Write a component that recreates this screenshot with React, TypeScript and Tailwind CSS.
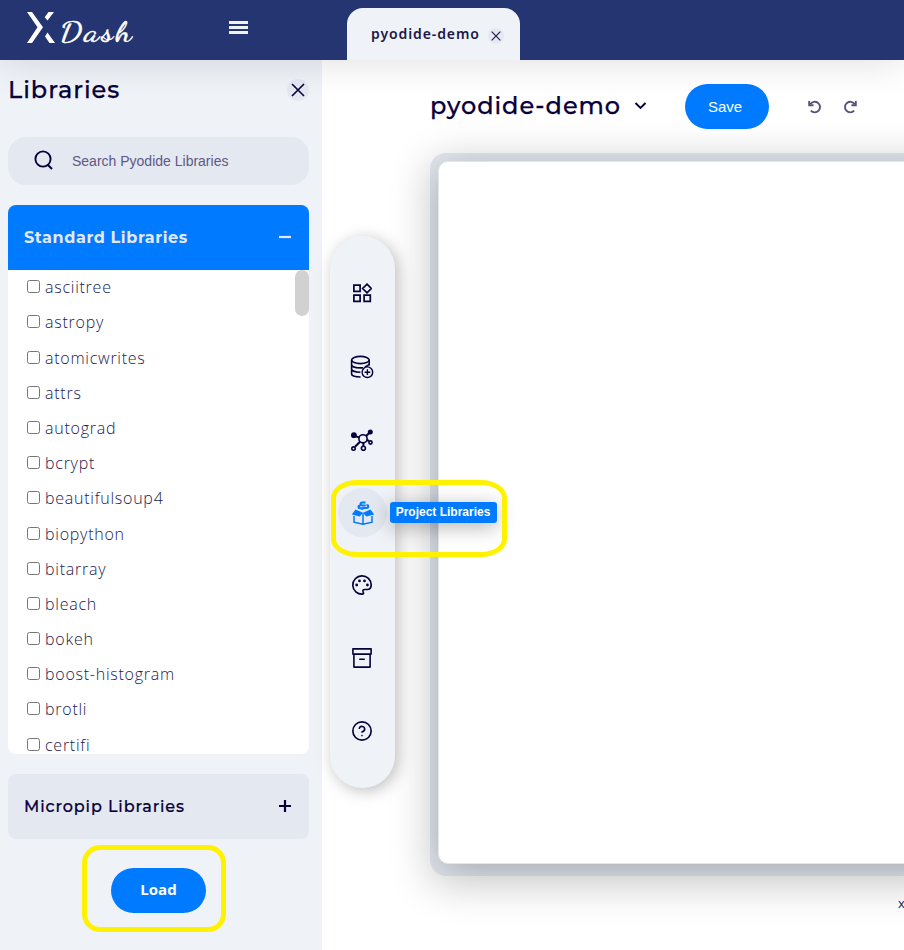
import React from "react";
import { CircleHelp } from "lucide-react";

const libraries = [
  "asciitree",
  "astropy",
  "atomicwrites",
  "attrs",
  "autograd",
  "bcrypt",
  "beautifulsoup4",
  "biopython",
  "bitarray",
  "bleach",
  "bokeh",
  "boost-histogram",
  "brotli",
  "certifi",
];

function Cross({ className }: { className: string }) {
  return (
    <svg viewBox="0 0 14 14" className={className} fill="none" stroke="currentColor" strokeWidth="1.6">
      <path d="M1 1l12 12M13 1L1 13" />
    </svg>
  );
}

function Widgets() {
  return (
    <svg viewBox="0 0 20 20" className="size-5" fill="none" stroke="currentColor" strokeWidth="1.700">
      <path d="M1.900 2.200h6.200v6.200H1.900zM1.900 12.200h6.200v6.200H1.900zM12.100 12.200h6.200v6.200h-6.200zM15 1.200l4.300 4.300L15 9.800l-4.300-4.300z" />
    </svg>
  );
}

function DatabaseAdd() {
  return (
    <svg viewBox="0 0 24 24" className="size-6" fill="none" stroke="currentColor" strokeWidth="1.600">
      <ellipse cx="10.4" cy="5" rx="8.800" ry="3.600" />
      <path d="M1.600 5v14c0 1.700 4 3 9 3M19.200 5v5.500M1.600 9.500c0 2 4 3.400 8.800 3.400 1 0 2-.1 2.800-.2M1.600 14c0 1.900 4 3.200 8.800 3.200M19.200 9c-.6 1.400-2.400 2.300-4.500 2.900" />
      <circle cx="17.400" cy="17.200" r="5.300" strokeWidth="1.400" />
      <path d="M17.400 14.300v5.800M14.500 17.200h5.800" strokeWidth="1.400" />
    </svg>
  );
}

function Network() {
  return (
    <svg viewBox="0 0 24 24" className="size-6" fill="none" stroke="currentColor" strokeWidth="1.600">
      <circle cx="13" cy="10.800" r="4.100" />
      <path d="M9.300 9.600L5 7.800M16.100 8L19 5.200M10 13.800L5 18.800M13.400 15v3M17 12l2 1" strokeWidth="2" />
      <circle cx="3.900" cy="7.200" r="2.900" fill="currentColor" stroke="none" />
      <circle cx="20.300" cy="4" r="2.500" fill="currentColor" stroke="none" />
      <circle cx="3.500" cy="20.600" r="1.700" />
      <circle cx="13.400" cy="20.300" r="2" />
      <circle cx="20.500" cy="14.500" r="1.600" />
    </svg>
  );
}

function OpenBox() {
  return (
    <svg viewBox="0 0 24 24" className="size-6" fill="currentColor">
      <path d="M4.500 8.600l7.500 3.200-3.300 3.800L.8 13.400zM19.500 8.600L12 11.800l3.300 3.800 7.900-2.200z" />
      <path d="M3 15v6.200l9 2 9-2V15M12 12v11" fill="none" stroke="currentColor" strokeWidth="1.500" />
      <path
        d="M14.600 1.600h-3.200c-1.600 0-1.900.7-1.900 1.500s.6 1.300 1.700 1.300h3.500M9.500 4.500c-1.500 0-2 .5-2 1.400s.6 1.400 1.700 1.400h3.600M15.500 4.100c1.200 0 1.700.6 1.700 1.400s-.6 1.500-1.800 1.500h-2.900c-1 0-1.300.5-1.300 1.800"
        fill="none"
        stroke="currentColor"
        strokeWidth="2"
      />
    </svg>
  );
}

function PaletteIcon() {
  return (
    <svg viewBox="0 0 24 24" className="size-6" fill="none" stroke="currentColor" strokeWidth="1.700">
      <path d="M12.600 21.200A9.200 9.200 0 1 1 21.200 12c0 3.200-1.700 4.500-4.200 4.500h-2.200c-1.600 0-2.100.9-1.700 2.200.5 1.500.6 2.400-.5 2.500z" />
      <g fill="currentColor" stroke="none">
        <circle cx="6.700" cy="12" r="1.400" />
        <circle cx="9.500" cy="7.900" r="1.400" />
        <circle cx="14.500" cy="7.900" r="1.400" />
        <circle cx="17.400" cy="12" r="1.400" />
      </g>
    </svg>
  );
}

function ArchiveBox() {
  return (
    <svg viewBox="0 0 20 20" className="size-5" fill="none" stroke="currentColor" strokeWidth="1.600" strokeLinejoin="round">
      <path d="M.9.900h18.200v5.200H.9zM1.900 6.200v12.900h16.200V6.200M7.200 11.200h5.600" />
    </svg>
  );
}

function Rotate({ className }: { className: string }) {
  return (
    <svg viewBox="0 0 14 14" className={className} fill="none" stroke="currentColor" strokeWidth="1.900">
      <path d="M2.300 4.200A5.300 5.300 0 1 1 2.800 10.600" />
      <path d="M1.200 1v4.200h4.300" />
    </svg>
  );
}

function AccordionHeader({ title, open }: { title: string; open?: boolean }) {
  return (
    <div
      className={
        open
          ? "flex h-[65px] items-center justify-between rounded-t-[8px] bg-[#007bff] px-4 text-[#e3e8f0]"
          : "flex h-[65px] items-center justify-between rounded-[8px] bg-[#e4e8f0] px-4 text-[#08003b]"
      }
    >
      <span
        className={
          open
            ? "font-['Montserrat','Inter',sans-serif] text-[16px] font-bold tracking-[0.6px]"
            : "font-['Montserrat','Inter',sans-serif] text-[16px] font-medium tracking-[0.88px] [-webkit-text-stroke:0.2px_#08003b]"
        }
      >
        {title}
      </span>
      <svg viewBox="0 0 12 12" className="mr-[2px] mb-px size-3" stroke="currentColor" strokeWidth="2.200">
        <path d={open ? "M0 6h12" : "M0 6h12M6 0v12"} />
      </svg>
    </div>
  );
}

function Sidebar() {
  return (
    <aside className="flex w-[322px] shrink-0 flex-col bg-[#eff3f7] pl-2 pr-[13px]">
      <div className="flex h-[77px] items-start justify-between pt-[11px]">
        <h1 className="mt-px font-['Montserrat','Inter',sans-serif] text-[24px] leading-[36px] font-medium tracking-[0.96px] text-[#08003b] [-webkit-text-stroke:0.25px_#08003b]">
          Libraries
        </h1>
        <span className="mt-[8px] flex size-[22px] items-center justify-center rounded-full bg-[#e4e8f0] text-[#08003b]">
          <Cross className="size-[14px]" />
        </span>
      </div>
      <div className="flex h-12 shrink-0 items-center rounded-[18px] bg-[#e4e8f0] pl-[26px]">
        <svg viewBox="0 0 20 20" className="mb-[2px] size-5 text-[#08003b]" fill="none" stroke="currentColor" strokeWidth="1.900">
          <circle cx="9" cy="9" r="7.600" />
          <path d="M13.500 14.500l4.500 4.500" />
        </svg>
        <span className="ml-[18px] font-['Liberation_Sans',Arial,sans-serif] text-[14px] text-[#5d5885]">
          Search Pyodide Libraries
        </span>
      </div>
      <section className="mt-5">
        <AccordionHeader title="Standard Libraries" open />
        <div className="flex h-[484px] justify-between overflow-hidden rounded-b-[8px] bg-white">
          <ul className="pl-[19px]">
            {libraries.map((name) => (
              <li key={name} className="flex h-[35.2px] items-start pt-[8.200px]">
                <span className="mt-[2px] size-[13px] rounded-[2.500px] border border-[#767676] bg-white" />
                <span className="ml-[5px] font-['Open_Sans',sans-serif] text-[16px] leading-[18px] font-light tracking-[0.75px] text-[#211a4e]">
                  {name}
                </span>
              </li>
            ))}
          </ul>
          <div className="h-[46px] w-[14px] rounded-full bg-[#d1d1d1]" />
        </div>
      </section>
      <section className="mt-5">
        <AccordionHeader title="Micropip Libraries" />
      </section>
      <div className="ml-[74px] mt-[6px] flex h-[87px] w-[144px] rounded-[18px] border-[5px] border-[#fff200] pt-[18px] pl-6">
        <button className="h-[45px] w-[95px] rounded-full bg-[#007bff] pb-[2px] font-['Open_Sans',sans-serif] text-[15px] font-bold text-white">
          Load
        </button>
      </div>
    </aside>
  );
}

function Toolbar() {
  return (
    <nav className="relative z-10 mt-[176px] flex h-[552px] w-[65px] shrink-0 flex-col items-center rounded-full bg-[#eff3f7] pt-[21px] text-[#08003b] shadow-[3px_3px_16px_rgba(0,0,0,0.26)]">
      <div className="flex h-[73px] items-center pr-px pb-px">
        <Widgets />
      </div>
      <div className="flex h-[73px] items-center pr-px">
        <DatabaseAdd />
      </div>
      <div className="flex h-[73px] items-center pr-px">
        <Network />
      </div>
      <div className="relative flex h-[73px] items-center">
        <span className="flex size-[49px] items-center justify-center rounded-full bg-[#e4e8f0] text-[#007bff]">
          <OpenBox />
        </span>
        <span className="absolute top-[26px] left-[52px] flex h-[21px] w-[107px] items-center justify-center rounded-[3px] bg-[#007bff] pr-px pb-[2px] font-['Liberation_Sans',Arial,sans-serif] text-[12px] font-bold whitespace-nowrap text-white shadow-[0_4px_20px_rgba(0,0,0,0.3)]">
          Project Libraries
        </span>
        <span className="absolute top-[4px] left-[-7px] h-[77px] w-[176px] rounded-[26px/18px] border-[5px] border-[#fff200]" />
      </div>
      <div className="flex h-[73px] items-center pr-px pb-px">
        <PaletteIcon />
      </div>
      <div className="flex h-[73px] items-center pr-px pb-px">
        <ArchiveBox />
      </div>
      <div className="flex h-[73px] items-center pr-px pb-px">
        <CircleHelp className="size-[22px]" strokeWidth={1.8} />
      </div>
    </nav>
  );
}

export default function App() {
  return (
    <div className="flex h-[950px] w-[904px] flex-col overflow-hidden bg-white">
      <header className="relative z-20 flex h-[60px] shrink-0 bg-[#243572] shadow-[0_0_40px_rgba(0,0,0,0.14)]">
        <div className="flex w-[347px] items-start">
          <svg viewBox="0 0 28 32" className="mt-[11px] ml-[27px] h-8 w-7 fill-white">
            <path d="M0 1h5l11 15.300L5 32H0l10.500-15.700zM21.500 1H27l-6.500 8.500-2.800-3.300zM20.500 21.500L28 32h-5.500l-4.500-6.500z" />
          </svg>
          <span className="mt-[14px] ml-[5px] w-[77px] origin-left scale-x-125 font-['Dancing_Script','Lato',cursive] text-[27px] leading-[38px] font-normal tracking-[2px] whitespace-nowrap text-white [-webkit-text-stroke:0.4px_white]">
            Dash
          </span>
          <div className="mt-[21px] ml-[92px] flex h-[13px] w-[19px] flex-col justify-between">
            <span className="h-[3px] bg-[#eff3f7]" />
            <span className="h-[3px] bg-[#eff3f7]" />
            <span className="h-[3px] bg-[#eff3f7]" />
          </div>
        </div>
        <div className="mt-2 flex h-[52px] w-[173px] items-start rounded-t-[16px] bg-[#eff3f7] pl-6 text-[#1e1648]">
          <span className="mt-[14px] w-[109px] font-['Noto_Sans',sans-serif] text-[14px] leading-6 font-semibold tracking-[0.9px]">
            pyodide-demo
          </span>
          <span className="mt-5 ml-[8px] flex size-4 items-center justify-center rounded-full bg-[#e4e8f0]">
            <Cross className="size-[10px]" />
          </span>
        </div>
      </header>
      <div className="flex min-h-0 grow">
        <Sidebar />
        <main className="flex min-w-0 grow pl-2">
          <Toolbar />
          <div className="flex min-w-0 grow flex-col pl-[35px]">
            <div className="flex h-[93px] shrink-0 items-center">
              <h2 className="mb-[2px] w-[204px] font-['Montserrat','Inter',sans-serif] text-[24px] leading-8 font-medium tracking-[0.94px] whitespace-nowrap text-[#08003b] [-webkit-text-stroke:0.25px_#08003b]">
                pyodide-demo
              </h2>
              <svg viewBox="0 0 14 10" className="mb-px h-[10px] w-[14px]" fill="none" stroke="#08003b" strokeWidth="1.900">
                <path d="M1.500 2l5 5 5-5" />
              </svg>
              <button className="ml-[37px] h-[45px] w-[84px] rounded-full bg-[#007bff] pt-px pr-[4px] font-['Liberation_Sans',Arial,sans-serif] text-[15px] text-white">
                Save
              </button>
              <div className="ml-[39px] flex gap-[21px] text-[#57507b]">
                <Rotate className="size-[14px]" />
                <Rotate className="size-[14px] -scale-x-100" />
              </div>
            </div>
            <div className="h-[723px] w-[520px] shrink-0 overflow-hidden rounded-[16px] bg-[#e2e6ee] pt-2 pl-2 shadow-[0_8px_40px_rgba(0,0,0,0.22)]">
              <div className="h-[703px] w-full rounded-[10px] border border-[#e2e6ee] bg-white shadow-[0_8px_40px_rgba(0,0,0,0.28)]" />
            </div>
            <p className="mt-[17px] ml-[468px] font-['Open_Sans',sans-serif] text-[13px] leading-5 text-[#211a4e]">x</p>
          </div>
        </main>
      </div>
    </div>
  );
}
